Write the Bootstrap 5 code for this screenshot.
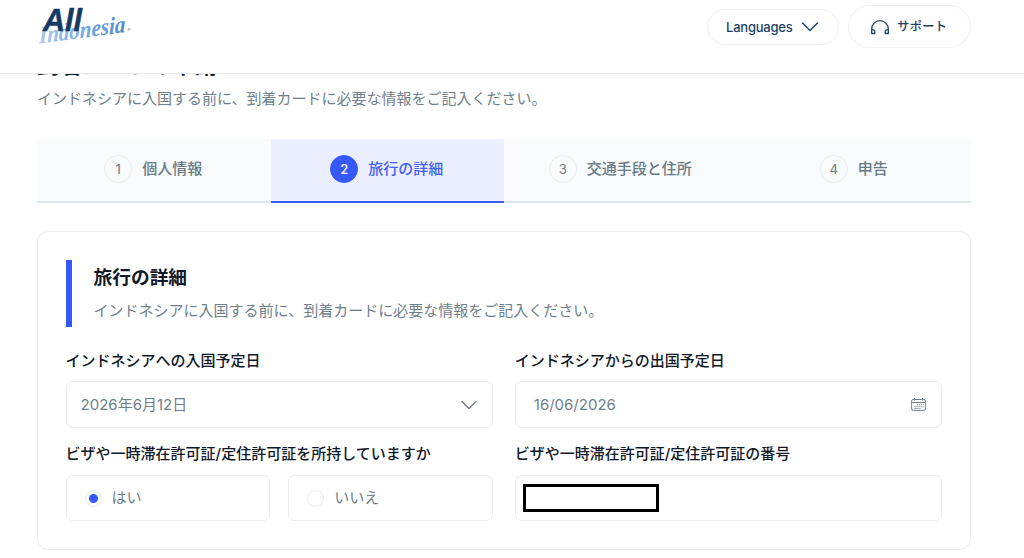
<!DOCTYPE html>
<html lang="ja">
<head>
<meta charset="utf-8">
<meta name="viewport" content="width=device-width, initial-scale=1">
<title>All Indonesia</title>
<link href="https://cdn.jsdelivr.net/npm/bootstrap@5.3.0/dist/css/bootstrap.min.css" rel="stylesheet">
<style>
  body { font-family: Inter, "Noto Sans CJK JP", sans-serif; font-size: 15px; line-height: 22px; color: #67788a; background: #fff; overflow: hidden; }
  .topbar { height: 74px; border-bottom: 1px solid #e9eaec; padding: 5px 53px 0 37px; }
  .brand-mark { margin-top: -3px; }
  .pill { border: 1px solid #eeeff3; color: #1d4266; font-weight: 500; border-radius: 40px; background: #fff; }
  .pill-lang { height: 36px; width: 132px; font-size: 13px; letter-spacing: -.22px; padding: 0 19px 0 18px; margin-right: 1px; }
  .pill-help { height: 43px; width: 123px; font-size: 12.5px; padding: 0 23px 0 21px; }
  .page { padding: 50px 53px 0 37px; }
  .page-title { font-size: 22.5px; line-height: 30px; font-weight: 700; color: #111827; margin-bottom: 8px; }
  .steps { margin-top: 29px; height: 64px; background: #f8fafc; }
  .step { color: #677a85; font-weight: 500; border-bottom: 2px solid #dfe5ec; gap: 10px; padding: 0 1px 2px 0; }
  .step.current { background: #ebeeff; color: #4361f5; border-color: #3b5bfb; }
  .step span:last-child { margin-top: -1px; }
  .step-no { width: 28px; height: 28px; border: 1px solid #ebecf0; border-radius: 50%; font-size: 13.1px; font-weight: 400; }
  .current .step-no { background: #3758f9; border-color: #3758f9; color: #fff; font-weight: 500; }
  .panel { margin-top: 28px; height: 319px; border: 1px solid #ebecf0; border-radius: 11px; padding: 28px 28px 28px 27.6px; }
  .section-head { border-left: 6px solid #3758f9; height: 67px; padding: 5px 0 0 22px; margin-bottom: 23px; }
  .section-head h2 { font-size: 18.7px; line-height: 26px; font-weight: 700; color: #111827; margin-bottom: 9px; }
  .muted { color: #6f7f8b; }
  .cols { display: grid; grid-template-columns: 1fr 1fr; column-gap: 22px; }
  .field-label { display: block; color: #111827; font-weight: 500; margin-bottom: 9px; white-space: nowrap; }
  .box { height: 47px; border: 1px solid #ebecf0; border-radius: 7px; color: #6f7f8b; }
  .box-select { padding: 0 15px 0 14px; }
  .box-date { padding: 0 15px 0 18px; }
  .box-radio { height: 46px; padding-left: 18px; gap: 10px; }
  .box-number { height: 46px; padding-left: 7px; }
  .radio-row { gap: 18px; }
  .gap-row { margin-bottom: 15px; }
  .gap-row + .cols .field-label { margin-bottom: 10px; }
  .dot { width: 17px; height: 17px; border: 1px solid #e6e8ec; border-radius: 50%; }
  .dot.on::after { content: ""; width: 9px; height: 9px; border-radius: 50%; background: #3758f9; }
  .redacted { width: 136px; height: 28px; border: 3px solid #000; }
</style>
</head>
<body>
<header class="topbar navbar fixed-top bg-white d-flex align-items-start flex-nowrap">
  <a href="#" aria-label="All Indonesia" class="brand-mark d-block">
    <svg width="98" height="50" viewBox="37 2 98 50" class="d-block">
      <defs><linearGradient id="sea" x1="0" x2="1"><stop offset="0" stop-color="#a9cbee"/><stop offset=".5" stop-color="#78abdf"/><stop offset="1" stop-color="#4c8bd0"/></linearGradient></defs>
      <text transform="translate(39 43.500) rotate(-7.500) skewX(-8)" font-family="Liberation Serif" font-style="italic" font-weight="700" font-size="24" fill="url(#sea)" textLength="87" lengthAdjust="spacingAndGlyphs">Indonesia</text>
      <text x="43" y="30.500" font-family="Liberation Sans" font-style="italic" font-weight="700" font-size="31" fill="#143a63" stroke="#143a63" stroke-width=".5" textLength="39" lengthAdjust="spacingAndGlyphs">All</text>
      <circle cx="129" cy="29.300" r="1.500" fill="#b8bfc7"/>
    </svg>
  </a>
  <div class="d-flex align-items-center gap-2">
    <button class="pill pill-lang d-flex align-items-center justify-content-between">Languages
      <svg width="18" height="12" viewBox="0 0 18 12" fill="none" stroke="#1d4266" stroke-width="1.5" stroke-linecap="round" stroke-linejoin="round"><path d="M1.500 2 9 9.500 16.500 2"/></svg>
    </button>
    <button class="pill pill-help d-flex align-items-center justify-content-between">
      <svg width="20" height="16" viewBox="0 0 20 16" fill="none" stroke="#1d4266" stroke-width="1.300" stroke-linejoin="round"><path d="M1.700 14.500V10a8.300 8.300 0 0 1 16.600 0v4.500M1.700 10.800h1.800l1.300.9v2.800H1.700zM18.300 10.800h-1.800l-1.300.9v2.800h3.100z"/></svg>サポート
    </button>
  </div>
</header>

<main class="page">
  <h1 class="page-title">到着カードの申請</h1>
  <p class="muted mb-0">インドネシアに入国する前に、到着カードに必要な情報をご記入ください。</p>

  <nav class="steps row g-0">
    <div class="step col d-flex align-items-center justify-content-center"><span class="step-no d-flex align-items-center justify-content-center">1</span><span>個人情報</span></div>
    <div class="step current col d-flex align-items-center justify-content-center"><span class="step-no d-flex align-items-center justify-content-center">2</span><span>旅行の詳細</span></div>
    <div class="step col d-flex align-items-center justify-content-center"><span class="step-no d-flex align-items-center justify-content-center">3</span><span>交通手段と住所</span></div>
    <div class="step col d-flex align-items-center justify-content-center"><span class="step-no d-flex align-items-center justify-content-center">4</span><span>申告</span></div>
  </nav>

  <section class="panel">
    <div class="section-head">
      <h2>旅行の詳細</h2>
      <p class="muted mb-0">インドネシアに入国する前に、到着カードに必要な情報をご記入ください。</p>
    </div>
    <div class="cols gap-row">
      <div>
        <label class="field-label">インドネシアへの入国予定日</label>
        <div class="box box-select d-flex align-items-center justify-content-between">2026年6月12日
          <svg width="16" height="10" viewBox="0 0 16 10" fill="none" stroke="#70778a" stroke-width="1.300" stroke-linecap="round" stroke-linejoin="round"><path d="M1 1.500 8 8.500l7-7"/></svg>
        </div>
      </div>
      <div>
        <label class="field-label">インドネシアからの出国予定日</label>
        <div class="box box-date d-flex align-items-center justify-content-between">16/06/2026
          <svg width="15" height="13" viewBox="0 0 15 13" fill="none" stroke="#777e90" stroke-width="1"><rect x=".6" y="1.500" width="13.800" height="10.900" rx="1.500"/><path d="M.6 4.500h13.800M3.500 0v2.500M11.500 0v2.500"/><path d="M6 6.800h6.500M3.500 8.700h9M3.500 10.500h6.500" stroke-width="1.100" stroke-dasharray="1.200 .8"/></svg>
        </div>
      </div>
    </div>
    <div class="cols">
      <div>
        <label class="field-label">ビザや一時滞在許可証/定住許可証を所持していますか</label>
        <div class="radio-row d-flex">
          <div class="box box-radio flex-fill w-50 d-flex align-items-center"><span class="dot on d-flex align-items-center justify-content-center"></span>はい</div>
          <div class="box box-radio flex-fill w-50 d-flex align-items-center"><span class="dot"></span>いいえ</div>
        </div>
      </div>
      <div>
        <label class="field-label">ビザや一時滞在許可証/定住許可証の番号</label>
        <div class="box box-number d-flex align-items-center"><div class="redacted"></div></div>
      </div>
    </div>
  </section>
</main>
<script src="https://cdn.jsdelivr.net/npm/bootstrap@5.3.0/dist/js/bootstrap.bundle.min.js"></script>
</body>
</html>
